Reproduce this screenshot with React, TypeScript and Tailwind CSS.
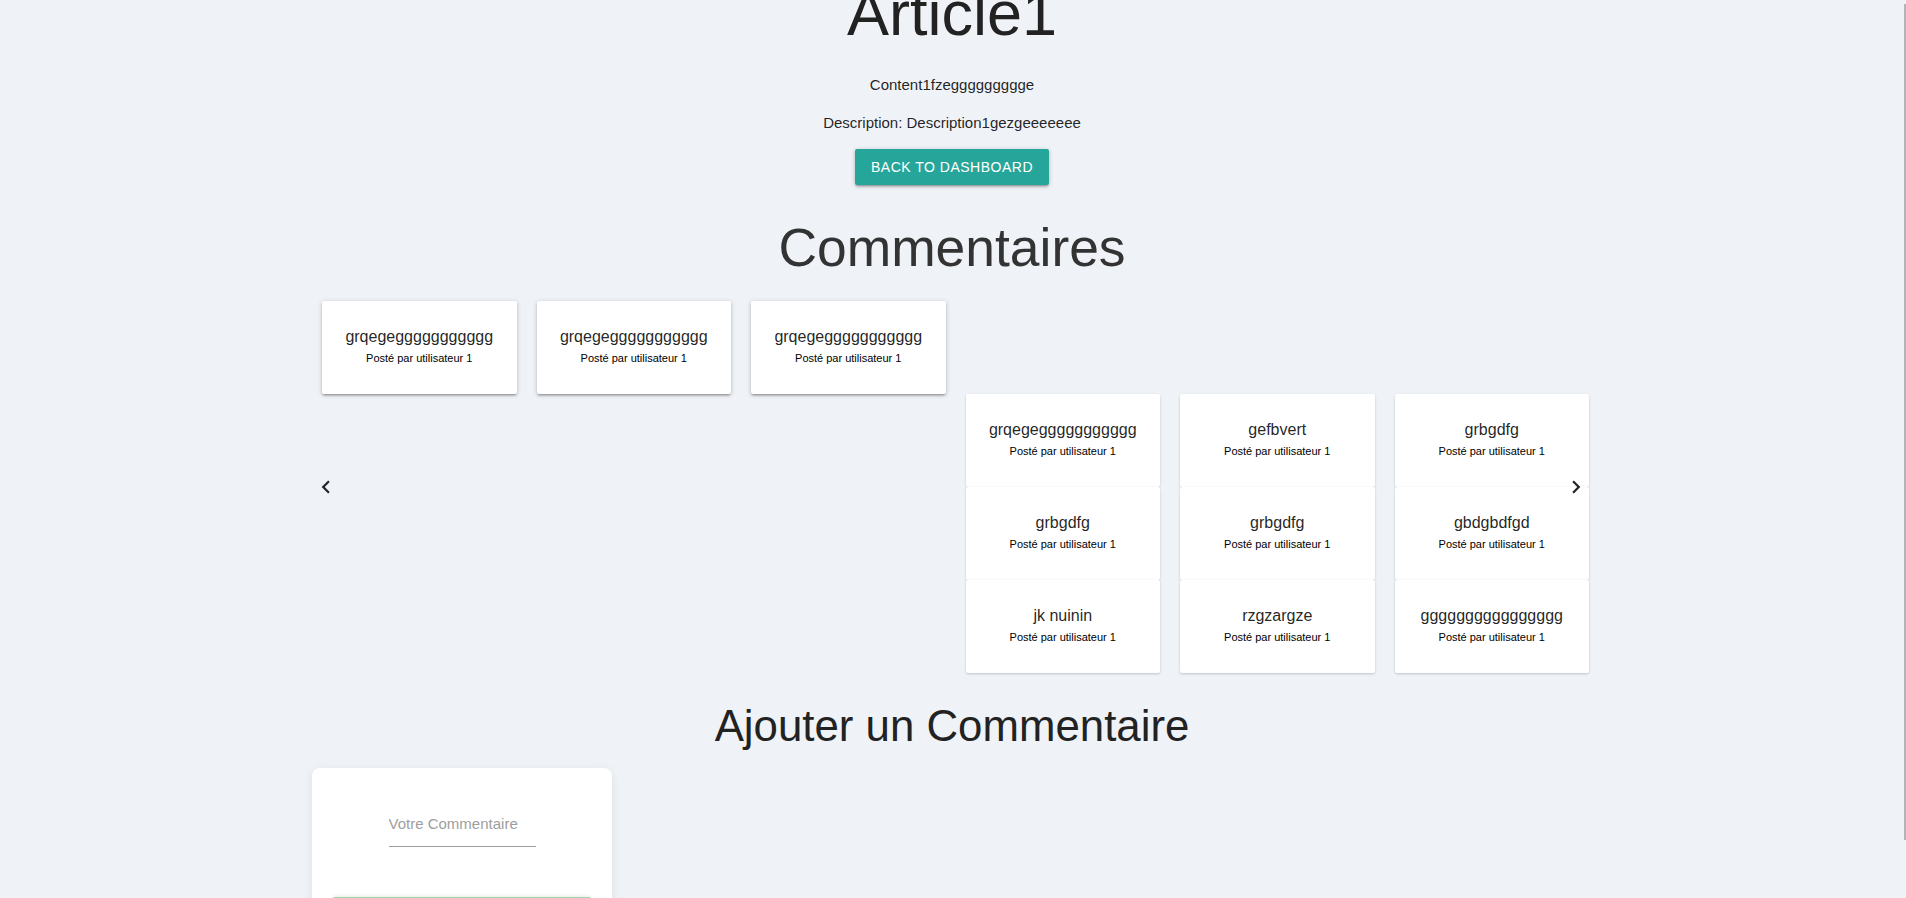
import React from "react";

const TOP_COMMENTS = [
  "grqegeggggggggggg",
  "grqegeggggggggggg",
  "grqegeggggggggggg",
];

const GRID_COMMENTS = [
  "grqegeggggggggggg",
  "gefbvert",
  "grbgdfg",
  "grbgdfg",
  "grbgdfg",
  "gbdgbdfgd",
  "jk nuinin",
  "rzgzargze",
  "gggggggggggggggg",
];

const CARD_SHADOW =
  "shadow-[0_2px_2px_0_rgba(0,0,0,0.14),0_3px_1px_-2px_rgba(0,0,0,0.12),0_1px_5px_0_rgba(0,0,0,0.2)]";

function CommentCard({ text, className = "" }: { text: string; className?: string }) {
  return (
    <div
      className={`flex h-[93px] w-[194.5px] shrink-0 flex-col items-center justify-center pb-[2px] bg-white ${className}`}
    >
      <span className="text-[16px] leading-[22px] text-[rgba(0,0,0,0.87)]">{text}</span>
      <span className="text-[11px] leading-[20px] text-black">Posté par utilisateur 1</span>
    </div>
  );
}

function ChevronLeft() {
  return (
    <svg width="26" height="26" viewBox="0 0 24 24" fill="currentColor" aria-hidden="true">
      <path d="M15.41 7.41L14 6l-6 6 6 6 1.41-1.41L10.83 12z" />
    </svg>
  );
}

function ChevronRight() {
  return (
    <svg width="26" height="26" viewBox="0 0 24 24" fill="currentColor" aria-hidden="true">
      <path d="M10 6L8.59 7.41 13.17 12l-4.58 4.59L10 18l6-6z" />
    </svg>
  );
}

export default function App() {
  return (
    <div className="relative h-[898px] overflow-hidden bg-[#eff2f7] font-['Liberation_Sans',Arial,sans-serif] text-[rgba(0,0,0,0.87)]">
      {/* page is scrolled a little: heading runs off the top */}
      <div className="mt-[-21.5px] flex w-[1904px] flex-col items-center text-center">
        <h1 className="mb-[26px] text-[63px] leading-[1.1] text-[#222]">Article1</h1>
        <p className="mb-[15.5px] text-[15px] leading-[22.5px]">Content1fzeggggggggge</p>
        <p className="mb-[15px] text-[15px] leading-[22.5px]">
          Description: Description1gezgeeeeeee
        </p>
        <button
          type="button"
          className={`h-[36px] rounded-[2px] bg-[#26a69a] px-[16px] text-[14px] uppercase leading-[36px] tracking-[0.5px] text-white ${CARD_SHADOW}`}
        >
          Back to dashboard
        </button>

        <h2 className="mt-[34px] mb-[23px] text-[53.4px] leading-[1.1] text-[#333]">
          Commentaires
        </h2>

        {/* carousel */}
        <div className="relative w-[1280px] pl-[10px]">
          <div className="flex items-start gap-[20px]">
            {TOP_COMMENTS.map((c, i) => (
              <CommentCard key={i} text={c} className={`rounded-[2px] ${CARD_SHADOW}`} />
            ))}
            <div className="mt-[93px] grid grid-cols-3 gap-x-[20px]">
              {GRID_COMMENTS.map((c, i) => (
                <CommentCard
                  key={i}
                  text={c}
                  className="rounded-[2px] shadow-[0_1px_3px_0_rgba(0,0,0,0.12),0_1px_2px_0_rgba(0,0,0,0.08)]"
                />
              ))}
            </div>
          </div>
          <button
            type="button"
            aria-label="Previous"
            className="absolute left-[1px] top-1/2 -translate-y-1/2 text-[#222]"
          >
            <ChevronLeft />
          </button>
          <button
            type="button"
            aria-label="Next"
            className="absolute right-[3px] top-1/2 -translate-y-1/2 text-[#222]"
          >
            <ChevronRight />
          </button>
        </div>

        <h3 className="mt-[28.7px] mb-[17.8px] text-[43.8px] leading-[1.1] text-[#222]">
          Ajouter un Commentaire
        </h3>

        <div className="flex w-[1280px]">
          <form className="w-[300px] rounded-[8px] bg-white px-[21px] pt-[34px] pb-[20px] shadow-[0_2px_10px_rgba(0,0,0,0.08)]">
            <input
              type="text"
              placeholder="Votre Commentaire"
              className="mx-auto block h-[45px] w-[147px] border-b border-[#9e9e9e] bg-transparent text-[15px] text-[rgba(0,0,0,0.87)] outline-none placeholder:text-[#9e9e9e]"
            />
            <button
              type="button"
              className={`mt-[50px] block h-[36px] w-full rounded-[2px] bg-[#a5d6a7] text-[14px] uppercase tracking-[0.5px] text-white ${CARD_SHADOW}`}
            >
              Envoyer
            </button>
          </form>
        </div>
      </div>

      {/* overlay scrollbar thumb */}
      <div className="absolute right-0 top-[4px] h-[836px] w-[2px] bg-[#b4b4b4]" />
    </div>
  );
}
